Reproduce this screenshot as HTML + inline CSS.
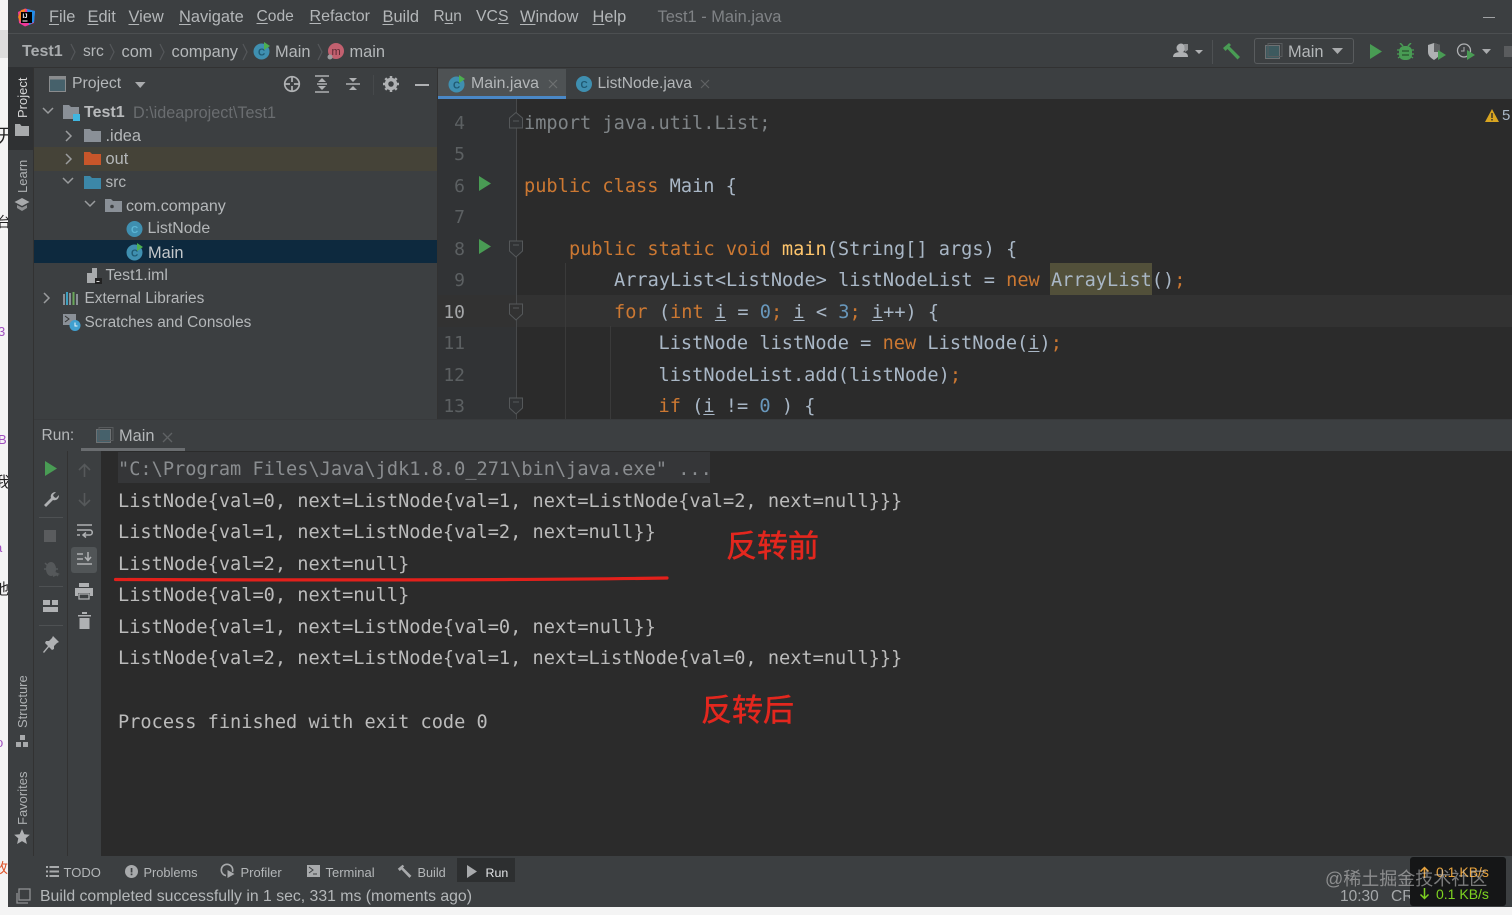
<!DOCTYPE html>
<html><head><meta charset="utf-8"><title>Test1 - Main.java</title>
<style>
html,body{margin:0;padding:0;background:#fff}
#r{position:relative;width:1512px;height:915px;overflow:hidden;background:#f4f4f4;font-family:"Liberation Sans","Noto Sans CJK SC",sans-serif;filter:blur(.35px)}
#r div,#r span.t,#r svg{position:absolute}
.t{position:absolute;white-space:nowrap;line-height:20px;font-size:16.4px;color:#b4b7b9}
.m{position:absolute;white-space:nowrap;line-height:22px;font-family:"DejaVu Sans Mono",monospace;font-size:18.63px;color:#a9b7c6;left:0}
.k{color:#cc7832}.n{color:#6897bb}.y{color:#ffc66d}.g{color:#7f8487}
.c{color:#bbbbbb}
u{text-decoration-thickness:1px;text-underline-offset:2px}
.ln{position:absolute;font-family:"DejaVu Sans Mono",monospace;font-size:18px;line-height:22px;color:#5c6062;width:28px;text-align:right;left:437px}
.v{position:absolute;white-space:nowrap;transform:rotate(-90deg);transform-origin:0 0;font-size:13px;line-height:16px;color:#aeb1b3}
.r{position:absolute;white-space:nowrap;font-size:22px}
.b{font-size:13px!important}
</style></head><body>
<div id="r">
<!-- left page fragments -->
<div style="left:0;top:30px;width:8px;height:28px;background:#ddd"></div>
<span class="t" style="left:-2px;top:126px;color:#222;font-size:18px">开</span>
<span class="t" style="left:-3px;top:212px;color:#222;font-size:14px">台</span>
<span class="t" style="left:-4px;top:304px;color:#a050c0;font-size:13px">j</span>
<span class="t" style="left:-2px;top:322px;color:#a050c0;font-size:13px">3</span>
<span class="t" style="left:-4px;top:412px;color:#a050c0;font-size:13px">j</span>
<span class="t" style="left:-2px;top:430px;color:#a050c0;font-size:13px">B</span>
<span class="t" style="left:-5px;top:473px;color:#222;font-size:15px">我</span>
<span class="t" style="left:-4px;top:517px;color:#a050c0;font-size:13px">j</span>
<span class="t" style="left:-5px;top:538px;color:#a050c0;font-size:13px">a</span>
<span class="t" style="left:-6px;top:580px;color:#222;font-size:15px">他</span>
<span class="t" style="left:-4px;top:716px;color:#a050c0;font-size:13px">j</span>
<span class="t" style="left:-4px;top:733px;color:#a050c0;font-size:13px">o</span>
<span class="t" style="left:-6px;top:858px;color:#e0552a;font-size:14px">改</span>

<!-- main window -->
<div style="left:8px;top:0;width:1504px;height:907px;background:#3c3f41"></div>
<div style="left:8px;top:33px;width:1504px;height:1px;background:#4c4f51"></div>
<div style="left:8px;top:67px;width:1504px;height:1px;background:#323232"></div>

<!-- logo -->
<svg style="left:17px;top:8px" width="19" height="19" viewBox="0 0 19 19"><path d="M1 4L8 0.5 18 3 17 15 8 18.5 2 15z" fill="#f0379a"/><path d="M1 9L4 2 9 1 3 14z" fill="#f58220"/><path d="M10 1L18 3 17 14 12 17z" fill="#1f8ee8"/><rect x="4" y="4" width="11" height="11" fill="#000"/><text x="5.5" y="10" font-size="6" font-weight="bold" fill="#fff" font-family="Liberation Sans">IJ</text><rect x="5.500" y="12.500" width="5" height="1" fill="#fff"/></svg>

<!-- menu -->
<span class="t" style="left:49px;top:7px"><u>F</u>ile</span>
<span class="t" style="left:87.500px;top:7px"><u>E</u>dit</span>
<span class="t" style="left:128.500px;top:7px"><u>V</u>iew</span>
<span class="t" style="left:179px;top:7px"><u>N</u>avigate</span>
<span class="t" style="left:256.500px;top:7px;font-size:15.600px"><u>C</u>ode</span>
<span class="t" style="left:309.500px;top:7px;font-size:16px"><u>R</u>efactor</span>
<span class="t" style="left:382.500px;top:7px"><u>B</u>uild</span>
<span class="t" style="left:433.500px;top:7px;font-size:15.400px">R<u>u</u>n</span>
<span class="t" style="left:476px;top:7px;font-size:15.800px">VC<u>S</u></span>
<span class="t" style="left:520px;top:7px"><u>W</u>indow</span>
<span class="t" style="left:592.500px;top:7px"><u>H</u>elp</span>
<span class="t" style="left:657.500px;top:7px;color:#808386">Test1 - Main.java</span>
<div style="left:1483px;top:17px;width:12px;height:1px;background:#a0a2a4"></div>

<!-- breadcrumb -->
<span class="t" style="left:22px;top:42px;font-weight:bold;color:#a9acae;font-size:16px">Test1</span>
<span class="t" style="left:83px;top:42px;font-size:15.600px">src</span>
<span class="t" style="left:121.500px;top:42px">com</span>
<span class="t" style="left:171.500px;top:42px">company</span>
<span class="t" style="left:275px;top:42px">Main</span>
<span class="t" style="left:349.500px;top:42px">main</span>
<svg style="left:68px;top:42px" width="270" height="20" viewBox="0 0 270 20" fill="none" stroke="#54575a" stroke-width="1.200"><path d="M3 2l4 8-4 8M42 2l4 8-4 8M92 2l4 8-4 8M175 2l4 8-4 8M250 2l4 8-4 8"/></svg>
<svg style="left:253px;top:42px" width="18" height="18" viewBox="0 0 18 18"><circle cx="8.500" cy="9.500" r="8" fill="#3f8fb0"/><text x="5" y="13.500" font-size="10" fill="#1f5a73" font-family="Liberation Sans" font-weight="bold">C</text><path d="M11 0l6 4-6 4z" fill="#4caf50"/></svg>
<svg style="left:327px;top:42px" width="18" height="18" viewBox="0 0 18 18"><circle cx="9" cy="9" r="8" fill="#c2606f"/><text x="4.500" y="13" font-size="11" fill="#5a2832" font-family="Liberation Sans">m</text><circle cx="3" cy="15" r="2.500" fill="#9a9c9e"/></svg>

<!-- toolbar right -->
<svg style="left:1172px;top:42px" width="32" height="18" viewBox="0 0 32 18"><circle cx="9" cy="6" r="4.500" fill="#afb1b3"/><path d="M1 15c0-4 4-5 8-5s7 1 7 5z" fill="#afb1b3"/><path d="M12 2l4 0 0 6-3 2z" fill="#8f9193"/><path d="M23 8h8l-4 4z" fill="#afb1b3"/></svg>
<div style="left:1212px;top:40px;width:1px;height:24px;background:#4e5153"></div>
<svg style="left:1222px;top:43px" width="20" height="17" viewBox="0 0 20 17"><path d="M1 5L7 0l2 2-1.500 1.500L18 14l-2.500 2.500L5.500 6 3.500 8z" fill="#499c54"/></svg>
<div style="left:1254px;top:38px;width:100px;height:26px;border:1px solid #595c5e;border-radius:3px;box-sizing:border-box"></div>
<svg style="left:1265px;top:43px" width="18" height="17" viewBox="0 0 18 17"><rect x="0.500" y="2.500" width="14" height="13" fill="#3d5a5f" stroke="#6e7173"/><rect x="3" y="0.500" width="14" height="13" fill="none" stroke="#585b5d"/></svg>
<span class="t" style="left:1288px;top:41.500px">Main</span>
<svg style="left:1332px;top:48px" width="12" height="8"><path d="M0 0h11l-5.500 6z" fill="#a9abad"/></svg>
<svg style="left:1370px;top:44px" width="13" height="15"><path d="M0 0l12 7.500L0 15z" fill="#499c54"/></svg>
<svg style="left:1397px;top:43px" width="17" height="17" viewBox="0 0 17 17"><path d="M3 0l3 3M14 0l-3 3" stroke="#499c54" stroke-width="1.500"/><rect x="2" y="3" width="13" height="14" rx="5" fill="#499c54"/><path d="M0 7h17M0 11h17M1 15l3-2M16 15l-3-2" stroke="#499c54" stroke-width="1.200"/><path d="M5 8h7M5 12h7" stroke="#2f5f35" stroke-width="1.500"/></svg>
<svg style="left:1427px;top:43px" width="20" height="18" viewBox="0 0 20 18"><path d="M1 2l6-2 6 2v7c0 4-3 6-6 8-3-2-6-4-6-8z" fill="#afb1b3"/><path d="M7 0l6 2v7H7z" fill="#5e6062"/><path d="M11 7l8 5-8 5z" fill="#499c54"/></svg>
<svg style="left:1456px;top:43px" width="20" height="18" viewBox="0 0 20 18"><circle cx="8" cy="7.500" r="6.500" fill="none" stroke="#afb1b3" stroke-width="1.300"/><path d="M8 4v4h-3" fill="none" stroke="#afb1b3"/><path d="M11 7l8 5-8 5z" fill="#499c54"/></svg>
<svg style="left:1482px;top:49px" width="10" height="6"><path d="M0 0h9l-4.500 5z" fill="#a9abad"/></svg>
<div style="left:1504px;top:46px;width:8px;height:11px;background:#5a5c5e"></div>

<!-- left tool stripe -->
<div style="left:8px;top:68px;width:25px;height:788px;background:#3c3f41"></div>
<div style="left:33px;top:68px;width:1px;height:788px;background:#323232"></div>
<div style="left:8px;top:67px;width:25px;height:83px;background:#2f3133"></div>
<span class="v" style="left:15px;top:118px;color:#d8d8d8">Project</span>
<svg style="left:15px;top:124px" width="14" height="12"><path d="M0 0h5l1.500 2H14v10H0z" fill="#a8aaac"/></svg>
<span class="v" style="left:15px;top:193px">Learn</span>
<svg style="left:14px;top:198px" width="16" height="14"><path d="M8 0l7.500 4L8 8 .5 4z" fill="#a8aaac"/><path d="M3 7v3l5 3 5-3V7L8 9.500z" fill="#8e9092"/></svg>
<span class="v" style="left:15px;top:728px">Structure</span>
<svg style="left:16px;top:735px" width="13" height="13"><rect x="4" y="0" width="5" height="5" fill="#a8aaac"/><rect x="0" y="7" width="5" height="5" fill="#a8aaac"/><rect x="7" y="7" width="5" height="5" fill="#a8aaac"/></svg>
<span class="v" style="left:15px;top:825px">Favorites</span>
<svg style="left:14px;top:829px" width="16" height="15"><path d="M8 0l2.300 5.200 5.500.5-4.100 3.700 1.200 5.600L8 12.100 3.100 15l1.200-5.600L.2 5.700l5.500-.5z" fill="#b0b2b4"/></svg>

<!-- project header -->
<svg style="left:49px;top:76px" width="18" height="17" viewBox="0 0 18 17"><rect x=".5" y=".5" width="16" height="15" fill="#46616b" stroke="#8a8c8e"/><rect x=".5" y=".5" width="16" height="3" fill="#8a8c8e"/></svg>
<span class="t" style="left:72px;top:74px;font-size:15.800px">Project</span>
<svg style="left:135px;top:82px" width="11" height="7"><path d="M0 0h10.500L5.200 6z" fill="#a9abad"/></svg>
<svg style="left:283px;top:75px" width="18" height="18" viewBox="0 0 18 18" fill="none" stroke="#afb1b3" stroke-width="1.700"><circle cx="9" cy="9" r="7.300"/><path d="M9 2v5M9 11v5M2 9h5M11 9h5"/></svg>
<svg style="left:314px;top:75px" width="16" height="18" viewBox="0 0 16 18"><path d="M1 1h14M1 17h14M3 9h10" stroke="#afb1b3" stroke-width="1.500"/><path d="M8 3l4 4H4zM8 15l-4-4h8z" fill="#afb1b3"/></svg>
<svg style="left:345px;top:75px" width="16" height="18" viewBox="0 0 16 18"><path d="M1 9h14" stroke="#afb1b3" stroke-width="1.500"/><path d="M8 7L4 3h8zM8 11l4 4H4z" fill="#afb1b3"/></svg>
<div style="left:373px;top:75px;width:1px;height:20px;background:#46494b"></div>
<svg style="left:383px;top:76px" width="16" height="16" viewBox="0 0 16 16"><circle cx="8" cy="8" r="4.500" fill="none" stroke="#afb1b3" stroke-width="3.500"/><path d="M8 0v3M8 13v3M0 8h3M13 8h3M2.300 2.300l2 2M11.700 11.700l2 2M2.300 13.700l2-2M11.700 4.300l2-2" stroke="#afb1b3" stroke-width="2.500"/></svg>
<div style="left:415px;top:84px;width:14px;height:2px;background:#afb1b3"></div>

<!-- tree rows -->
<div style="left:34px;top:147px;width:403px;height:24px;background:#454338"></div>
<div style="left:34px;top:240px;width:403px;height:23px;background:#0d293e"></div>
<svg style="left:41px;top:106px" width="14" height="10" fill="none" stroke="#9a9c9e" stroke-width="1.500"><path d="M2 2l5 5 5-5"/></svg>
<svg style="left:63px;top:104px" width="18" height="18"><path d="M0 1h6l2 2h8v12H0z" fill="#8a9097"/><rect x="10" y="10" width="7" height="7" fill="#40b6e0"/></svg>
<span class="t" style="left:84px;top:103px;font-weight:bold;color:#b8babc;font-size:16px">Test1</span>
<span class="t" style="left:133px;top:103px;color:#6a6d70;font-size:16.200px">D:\ideaproject\Test1</span>
<svg style="left:63px;top:129px" width="10" height="14" fill="none" stroke="#9a9c9e" stroke-width="1.500"><path d="M3 2l5 5-5 5"/></svg>
<svg style="left:84px;top:128px" width="17" height="15"><path d="M0 1h6l2 2h9v11H0z" fill="#8a9097"/></svg>
<span class="t" style="left:105.500px;top:125.500px">.idea</span>
<svg style="left:63px;top:152px" width="10" height="14" fill="none" stroke="#9a9c9e" stroke-width="1.500"><path d="M3 2l5 5-5 5"/></svg>
<svg style="left:84px;top:151px" width="17" height="15"><path d="M0 1h6l2 2h9v11H0z" fill="#c8562a"/></svg>
<span class="t" style="left:105.500px;top:149px">out</span>
<svg style="left:61px;top:176px" width="14" height="10" fill="none" stroke="#9a9c9e" stroke-width="1.500"><path d="M2 2l5 5 5-5"/></svg>
<svg style="left:84px;top:175px" width="17" height="15"><path d="M0 1h6l2 2h9v11H0z" fill="#3c87a8"/></svg>
<span class="t" style="left:105.500px;top:172.500px;font-size:15.400px">src</span>
<svg style="left:83px;top:199px" width="14" height="10" fill="none" stroke="#9a9c9e" stroke-width="1.500"><path d="M2 2l5 5 5-5"/></svg>
<svg style="left:105px;top:198px" width="17" height="15"><path d="M0 1h6l2 2h9v11H0z" fill="#8a9097"/><circle cx="7" cy="8.500" r="1.800" fill="#3c3f41"/></svg>
<span class="t" style="left:126px;top:196px;font-size:16.050px">com.company</span>
<svg style="left:126px;top:220px" width="18" height="18"><circle cx="8.500" cy="9" r="8" fill="#3f8fb0"/><text x="5" y="13" font-size="10" fill="#5bb5d4" font-family="Liberation Sans" font-weight="bold">C</text></svg>
<span class="t" style="left:147.500px;top:219px;font-size:15.900px">ListNode</span>
<svg style="left:126px;top:243px" width="18" height="18"><circle cx="8.500" cy="9.500" r="8" fill="#3f8fb0"/><text x="5" y="13.500" font-size="10" fill="#1f5a73" font-family="Liberation Sans" font-weight="bold">C</text><path d="M11 0l6 4-6 4z" fill="#4caf50"/></svg>
<span class="t" style="left:148px;top:242.500px;color:#c4c8cb">Main</span>
<svg style="left:86px;top:267px" width="17" height="17"><path d="M1 6h5V1h5v15H1z" fill="#a8aaac"/><rect x="9" y="11" width="7" height="6" fill="#222"/><rect x="10.500" y="14" width="3" height="1" fill="#ddd"/></svg>
<span class="t" style="left:105.500px;top:266px;font-size:15.800px">Test1.iml</span>
<svg style="left:41px;top:291px" width="10" height="14" fill="none" stroke="#9a9c9e" stroke-width="1.500"><path d="M3 2l5 5-5 5"/></svg>
<svg style="left:63px;top:291px" width="18" height="15"><path d="M1 3v11M7 2v12M14 3v11" stroke="#8a9097" stroke-width="2"/><path d="M4 1v13" stroke="#3fa0c0" stroke-width="2"/><path d="M10.500 1v13" stroke="#6aa85a" stroke-width="2"/></svg>
<span class="t" style="left:84.500px;top:289px;font-size:15.400px">External Libraries</span>
<svg style="left:63px;top:313px" width="19" height="19"><path d="M0 1h13v11H0z" fill="#8a9097"/><path d="M2 3l4 3-4 3" stroke="#333" fill="none"/><circle cx="12" cy="12.500" r="5.500" fill="#40a0d0"/><path d="M12 9.500v3.500h2.500" stroke="#e8f4fa" fill="none"/></svg>
<span class="t" style="left:84.500px;top:312.500px;font-size:15.400px">Scratches and Consoles</span>

<!-- tabs -->
<div style="left:437px;top:68px;width:1px;height:351px;background:#323232"></div>
<div style="left:438px;top:69px;width:128px;height:27px;background:#4e5254"></div>
<div style="left:438px;top:96px;width:128px;height:3px;background:#4a88c7"></div>
<svg style="left:448px;top:75px" width="18" height="18"><circle cx="8.500" cy="9.500" r="8" fill="#3f8fb0"/><text x="5" y="13.500" font-size="10" fill="#1f5a73" font-family="Liberation Sans" font-weight="bold">C</text><path d="M11 0l6 4-6 4z" fill="#4caf50"/></svg>
<span class="t" style="left:471px;top:74px;font-size:15.900px">Main.java</span>
<svg style="left:548px;top:79px" width="10" height="10" stroke="#6d7072" stroke-width="1.200"><path d="M1 1l8 8M9 1l-8 8"/></svg>
<svg style="left:575px;top:75px" width="18" height="18"><circle cx="9" cy="9" r="8" fill="#3f8fb0"/><text x="5.500" y="13" font-size="10" fill="#1f5a73" font-family="Liberation Sans" font-weight="bold">C</text></svg>
<span class="t" style="left:597.500px;top:74px;font-size:15.600px">ListNode.java</span>
<svg style="left:700px;top:79px" width="10" height="10" stroke="#5f6264" stroke-width="1.200"><path d="M1 1l8 8M9 1l-8 8"/></svg>

<!-- editor -->
<div id="ed" style="left:438px;top:99px;width:1074px;height:320px;background:#2b2b2b;overflow:hidden"></div>
<div style="left:438px;top:99px;width:78px;height:320px;background:#313335"></div>
<div style="left:438px;top:295px;width:1074px;height:32px;background:#323232"></div>
<div style="left:516px;top:99px;width:1px;height:320px;background:#47494b"></div>
<div style="left:565px;top:263px;width:1px;height:156px;background:#3a3a3a"></div>
<div style="left:610px;top:326px;width:1px;height:93px;background:#3a3a3a"></div>
<div style="left:1050px;top:263px;width:102px;height:32px;background:#52503a"></div>

<span class="ln" style="top:112.500px">4</span>
<span class="ln" style="top:143.500px">5</span>
<span class="ln" style="top:175.500px">6</span>
<span class="ln" style="top:206.500px">7</span>
<span class="ln" style="top:238.500px">8</span>
<span class="ln" style="top:269.500px">9</span>
<span class="ln" style="top:301.500px;color:#a4a6a8">10</span>
<span class="ln" style="top:332.500px">11</span>
<span class="ln" style="top:364.500px">12</span>
<span class="ln" style="top:395.500px">13</span>
<svg style="left:479px;top:176px" width="13" height="16"><path d="M0 0l12 7.500L0 15z" fill="#499c54"/></svg>
<svg style="left:479px;top:239px" width="13" height="16"><path d="M0 0l12 7.500L0 15z" fill="#499c54"/></svg>
<svg style="left:509px;top:112px" width="14" height="18" fill="#313335" stroke="#55585a"><path d="M.5 6L7 .5 13.500 6v10H.5z"/><path d="M4 9h6"/></svg>
<svg style="left:509px;top:240px" width="14" height="18" fill="#313335" stroke="#55585a"><path d="M.5 1h13v10L7 17 .5 11z"/><path d="M4 5h6"/></svg>
<svg style="left:509px;top:303px" width="14" height="18" fill="#323232" stroke="#55585a"><path d="M.5 1h13v10L7 17 .5 11z"/><path d="M4 5h6"/></svg>
<svg style="left:509px;top:397px" width="14" height="18" fill="#313335" stroke="#55585a"><path d="M.5 1h13v10L7 17 .5 11z"/><path d="M4 5h6"/></svg>

<div style="left:524px;top:1.500px;width:980px;height:915px">
<span class="m g" style="top:111px;color:#7f8487">import java.util.List;</span>
<span class="m" style="top:174px"><span class="k">public class</span> Main {</span>
<span class="m" style="top:237px;left:45px"><span class="k">public static void</span> <span class="y">main</span>(String[] args) {</span>
<span class="m" style="top:268px;left:90px">ArrayList&lt;ListNode&gt; listNodeList = <span class="k">new</span> ArrayList()<span class="k">;</span></span>
<span class="m" style="top:300px;left:90px"><span class="k">for</span> (<span class="k">int</span> <u>i</u> = <span class="n">0</span><span class="k">;</span> <u>i</u> &lt; <span class="n">3</span><span class="k">;</span> <u>i</u>++) {</span>
<span class="m" style="top:331px;left:134.500px">ListNode listNode = <span class="k">new</span> ListNode(<u>i</u>)<span class="k">;</span></span>
<span class="m" style="top:363px;left:134.500px">listNodeList.add(listNode)<span class="k">;</span></span>
<span class="m" style="top:394px;left:134.500px"><span class="k">if</span> (<u>i</u> != <span class="n">0</span> ) {</span>
</div>
<svg style="left:1485px;top:109px" width="14" height="13"><path d="M7 0l7 13H0z" fill="#d9a520"/><rect x="6.300" y="4" width="1.400" height="5" fill="#2b2b2b"/><rect x="6.300" y="10" width="1.400" height="1.500" fill="#2b2b2b"/></svg>
<span class="t" style="left:1502px;top:106px;color:#a9b7c6;font-size:15px">5</span>

<!-- run header -->
<div style="left:35px;top:419px;width:1477px;height:32px;background:#3c3f41"></div>
<div style="left:34px;top:419px;width:1478px;height:1px;background:#383a3c"></div>
<span class="t" style="left:41.500px;top:426px;font-size:15.500px">Run:</span>
<svg style="left:96px;top:427px" width="18" height="16"><rect x=".5" y="2.500" width="14" height="13" fill="#46616b" stroke="#6e7173"/><rect x="3" y=".5" width="14" height="13" fill="none" stroke="#585b5d"/></svg>
<span class="t" style="left:119px;top:426px">Main</span>
<svg style="left:162px;top:432px" width="11" height="11" stroke="#5f6264" stroke-width="1.300"><path d="M1 1l9 9M10 1l-9 9"/></svg>
<div style="left:81px;top:448px;width:104px;height:3px;background:#6a6d70"></div>

<!-- run side -->
<div style="left:35px;top:451px;width:32px;height:405px;background:#3c3f41"></div>
<div style="left:67px;top:451px;width:1px;height:405px;background:#323232"></div>
<div style="left:68px;top:451px;width:33px;height:405px;background:#3c3f41"></div>
<div style="left:101px;top:451px;width:1411px;height:405px;background:#2b2b2b"></div>
<svg style="left:45px;top:461px" width="13" height="15"><path d="M0 0l12 7.500L0 15z" fill="#499c54"/></svg>
<svg style="left:42px;top:490px" width="18" height="18" viewBox="0 0 18 18"><path d="M2 15L9 8c-1-3 1-6 5-6l-3 3 1 2 2 1 3-3c0 4-3 6-6 5l-7 7z" fill="#afb1b3"/></svg>
<div style="left:39px;top:517px;width:24px;height:1px;background:#4e5153"></div>
<div style="left:44px;top:530px;width:12px;height:12px;background:#5a5c5e"></div>
<svg style="left:43px;top:560px" width="18" height="18"><ellipse cx="8" cy="9" rx="5" ry="7" fill="#55585a"/><path d="M2 3l13 13M1 9h14" stroke="#55585a" stroke-width="1.500"/><path d="M10 11l7 3-7 3z" fill="#55585a"/></svg>
<div style="left:39px;top:586px;width:24px;height:1px;background:#4e5153"></div>
<svg style="left:43px;top:600px" width="16" height="13"><rect x="0" y="0" width="7" height="5" fill="#afb1b3"/><rect x="9" y="0" width="6" height="5" fill="#afb1b3"/><rect x="0" y="7" width="15" height="5" fill="#afb1b3"/></svg>
<div style="left:39px;top:625px;width:24px;height:1px;background:#4e5153"></div>
<svg style="left:42px;top:636px" width="17" height="17"><path d="M11 0l6 6-2 1-3 3 0 3-2 1-3-3-5 6-1-1 5-6-3-3 1-2 3 0 3-3z" fill="#afb1b3"/></svg>
<svg style="left:78px;top:463px" width="13" height="14" fill="none" stroke="#56595b" stroke-width="1.600"><path d="M6.500 14V2M1 7l5.500-5.500L12 7"/></svg>
<svg style="left:78px;top:493px" width="13" height="14" fill="none" stroke="#56595b" stroke-width="1.600"><path d="M6.500 0v12M1 7l5.500 5.500L12 7"/></svg>
<svg style="left:76px;top:523px" width="17" height="16" fill="none" stroke="#afb1b3" stroke-width="1.500"><path d="M1 2h15M1 7h13c3 0 3 5 0 5H8M1 12h3"/><path d="M10 9.500L7 12l3 2.500" /></svg>
<div style="left:71px;top:547px;width:26px;height:26px;background:#515557;border-radius:3px"></div>
<svg style="left:76px;top:552px" width="17" height="16" fill="none" stroke="#afb1b3" stroke-width="1.500"><path d="M1 2h6M1 7h6M1 12h15M12 0v8M9 5l3 3.500L15 5"/></svg>
<svg style="left:75px;top:583px" width="19" height="17"><path d="M4 0h10v4H4z" fill="#afb1b3"/><path d="M0 5h18v8h-3v-3H3v3H0z" fill="#afb1b3"/><path d="M4 11h10v5H4z" fill="none" stroke="#afb1b3" stroke-width="1.300"/></svg>
<svg style="left:78px;top:612px" width="13" height="17"><path d="M0 3h13v1.500H0zM4 0h5v2H4z" fill="#afb1b3"/><path d="M1.500 6h10v11h-10z" fill="#afb1b3"/></svg>

<!-- console -->
<div style="left:118px;top:452px;width:592px;height:31px;background:#353638"></div>
<div style="left:118px;top:1.500px;width:1000px;height:915px">
<span class="m" style="top:457px;color:#8a8d90">"C:\Program Files\Java\jdk1.8.0_271\bin\java.exe" ...</span>
<span class="m c" style="top:489px">ListNode{val=0, next=ListNode{val=1, next=ListNode{val=2, next=null}}}</span>
<span class="m c" style="top:520px">ListNode{val=1, next=ListNode{val=2, next=null}}</span>
<span class="m c" style="top:552px">ListNode{val=2, next=null}</span>
<span class="m c" style="top:583px">ListNode{val=0, next=null}</span>
<span class="m c" style="top:615px">ListNode{val=1, next=ListNode{val=0, next=null}}</span>
<span class="m c" style="top:646px">ListNode{val=2, next=ListNode{val=1, next=ListNode{val=0, next=null}}}</span>
<span class="m c" style="top:710px">Process finished with exit code 0</span>
</div>
<svg style="left:114px;top:574px" width="558" height="10"><path d="M1.500 5.500C150 6 400 6.500 553 4" fill="none" stroke="#e3201b" stroke-width="3.200" stroke-linecap="round"/></svg>
<span class="r" style="left:726px;top:525px;color:#e3271e;font-size:31px;line-height:38px;font-family:'Noto Sans CJK SC',sans-serif;-webkit-text-stroke:.5px #e3271e">反转前</span>
<span class="r" style="left:701px;top:689px;color:#e3271e;font-size:31px;line-height:38px;font-family:'Noto Sans CJK SC',sans-serif;-webkit-text-stroke:.5px #e3271e">反转后</span>

<!-- bottom tool bar -->
<div style="left:8px;top:856px;width:1504px;height:51px;background:#3c3f41"></div>
<svg style="left:46px;top:866px" width="13" height="12" fill="#a8aaac"><path d="M0 0h2v2H0zM3.500 0H13v2H3.500zM0 4.500h2v2H0zM3.500 4.500H13v2H3.500zM0 9h2v2H0zM3.500 9H13v2H3.500z"/></svg>
<span class="t" style="left:63.500px;top:862.500px;font-size:13px">TODO</span>
<svg style="left:125px;top:865px" width="13" height="13"><circle cx="6.500" cy="6.500" r="6.500" fill="#a8aaac"/><rect x="5.700" y="3" width="1.700" height="4.500" fill="#3c3f41"/><rect x="5.700" y="8.500" width="1.700" height="1.700" fill="#3c3f41"/></svg>
<span class="t" style="left:143.500px;top:862.500px;font-size:12.800px">Problems</span>
<svg style="left:220px;top:863px" width="16" height="16" fill="none"><circle cx="7" cy="7" r="5.700" stroke="#a8aaac" stroke-width="1.600"/><path d="M6 5l9 5.500L6 16z" fill="#3c3f41"/><path d="M7.500 7l7 4-7 4z" fill="#a8aaac"/></svg>
<span class="t" style="left:240.500px;top:862.500px;font-size:13px">Profiler</span>
<svg style="left:307px;top:865px" width="13" height="13"><rect width="13" height="12" fill="#a8aaac"/><path d="M2 2l4 3-4 3M6 9h4" stroke="#3c3f41" fill="none"/></svg>
<span class="t" style="left:325.500px;top:862.500px;font-size:13px">Terminal</span>
<svg style="left:397px;top:864px" width="16" height="15" viewBox="0 0 20 17"><path d="M1 5L7 0l2 2-1.500 1.500L18 14l-2.500 2.500L5.500 6 3.500 8z" fill="#a8aaac"/></svg>
<span class="t" style="left:417.500px;top:862.500px;font-size:12.700px">Build</span>
<div style="left:457px;top:858px;width:58px;height:24px;background:#2d2f30"></div>
<svg style="left:467px;top:865px" width="11" height="13"><path d="M0 0l10 6.500L0 13z" fill="#a8aaac"/></svg>
<span class="t" style="left:485.500px;top:862.500px;font-size:12.400px;color:#e4e6e8">Run</span>
<svg style="left:16px;top:888px" width="15" height="16" fill="none" stroke="#8f9193" stroke-width="1.300"><rect x="3" y="1" width="11" height="11"/><path d="M1 5v10h11"/></svg>
<span class="t" style="left:40px;top:886.500px;font-size:15.800px">Build completed successfully in 1 sec, 331 ms (moments ago)</span>

<span class="t" style="left:1340px;top:886.500px;font-size:15.500px;color:#a5a8aa">10:30</span>
<span class="t" style="left:1391px;top:886.500px;font-size:15.500px;color:#a5a8aa">CRLF</span>
<span class="t" style="left:1498px;top:886.500px;font-size:14px;color:#6a6d70">4</span>

<!-- net speed overlay -->
<div style="left:1410px;top:857px;width:96px;height:49px;background:#151617;border-radius:3px"></div>
<svg style="left:1419px;top:866px" width="12" height="12" fill="none" stroke="#e8a33d" stroke-width="1.500"><path d="M5.500 12V1.500M1.500 5.500l4-4 4 4"/></svg>
<span class="t" style="left:1436px;top:862px;font-size:14px;color:#e8a33d">0.1 KB/s</span>
<svg style="left:1419px;top:888px" width="12" height="12" fill="none" stroke="#7ed321" stroke-width="1.500"><path d="M5.500 0v10.500M1.500 6.500l4 4 4-4"/></svg>
<span class="t" style="left:1436px;top:884px;font-size:14px;color:#7ed321">0.1 KB/s</span>
<span class="t" style="left:1325px;top:869px;font-size:18px;color:rgba(205,205,205,.55)">@稀土掘金技术社区</span>
</div>
</body></html>
